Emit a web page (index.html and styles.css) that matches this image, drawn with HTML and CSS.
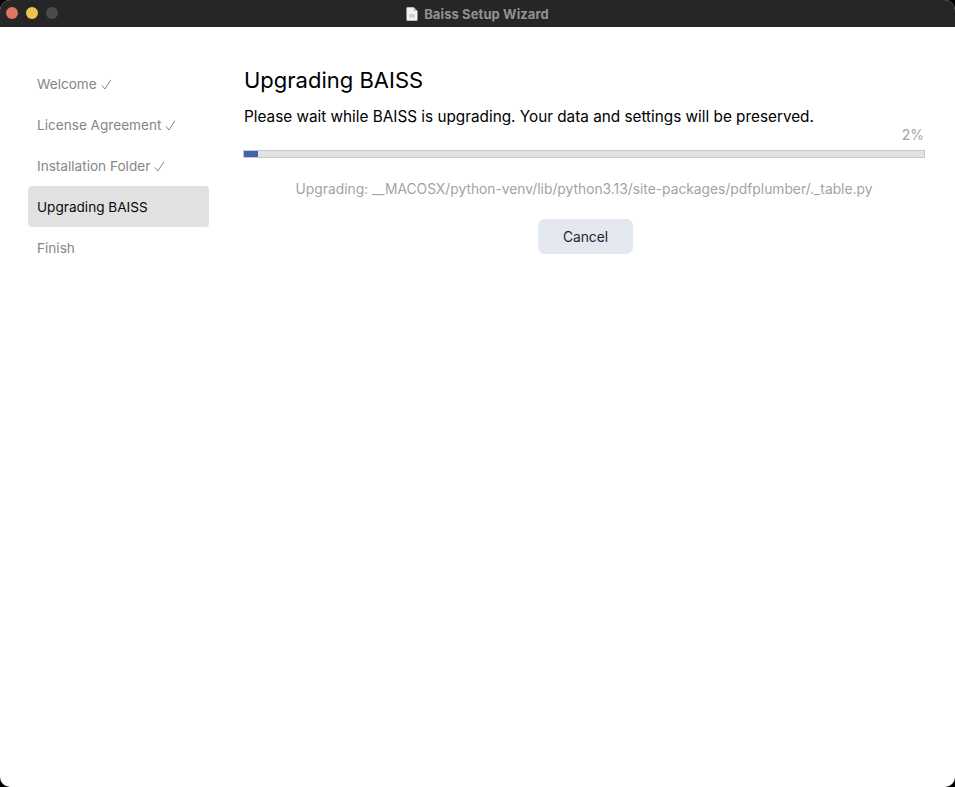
FILE: index.html
```html
<!DOCTYPE html>
<html lang="en">
<head>
<meta charset="utf-8">
<title>Baiss Setup Wizard</title>
<link rel="stylesheet" href="styles.css">
</head>
<body>
<div class="window">
  <header class="titlebar">
    <div class="lights">
      <span class="light red"></span>
      <span class="light yellow"></span>
      <span class="light grey"></span>
    </div>
    <div class="title">
      <svg class="doc" width="12" height="14" viewBox="0 0 12 14" aria-hidden="true">
        <path d="M0.5 1.2Q0.5 0.2 1.5 0.2H7.6L11.5 4.1V12.8Q11.5 13.8 10.5 13.8H1.5Q0.5 13.8 0.5 12.8Z" fill="#f1f1f1"/>
        <path d="M7.6 0.2L11.5 4.1H8.4Q7.6 4.1 7.6 3.3Z" fill="#bdbdbd"/>
        <rect x="3" y="7" width="6" height="3.5" fill="#cfcfcf"/>
      </svg>
      <span>Baiss Setup Wizard</span>
    </div>
  </header>
  <div class="content">
    <nav class="sidebar">
      <div class="step">Welcome <svg class="check" width="11" height="11" viewBox="0 0 11 11" aria-hidden="true"><path d="M1 6.4L3.9 10L9.9 0.8"/></svg></div>
      <div class="step">License Agreement <svg class="check" width="11" height="11" viewBox="0 0 11 11" aria-hidden="true"><path d="M1 6.4L3.9 10L9.9 0.8"/></svg></div>
      <div class="step">Installation Folder <svg class="check" width="11" height="11" viewBox="0 0 11 11" aria-hidden="true"><path d="M1 6.4L3.9 10L9.9 0.8"/></svg></div>
      <div class="step active">Upgrading BAISS</div>
      <div class="step">Finish</div>
    </nav>
    <main class="main">
      <h1 class="heading">Upgrading BAISS</h1>
      <p class="desc">Please wait while BAISS is upgrading. Your data and settings will be preserved.</p>
      <div class="percent">2%</div>
      <div class="progress"><div class="bar" style="width:2%"></div></div>
      <p class="file">Upgrading: __MACOSX/python-venv/lib/python3.13/site-packages/pdfplumber/._table.py</p>
      <div class="actions"><button class="cancel" type="button">Cancel</button></div>
    </main>
  </div>
</div>
</body>
</html>
```
FILE: styles.css
```css
html, body {
  margin: 0;
  height: 100%;
  background: #000;
}
body {
  font-family: Inter, "Liberation Sans", sans-serif;
  overflow: hidden;
}
.window {
  height: 787px;
  display: flex;
  flex-direction: column;
  background: #fff;
  border-radius: 10px;
  overflow: hidden;
}
.titlebar {
  height: 27px;
  flex: none;
  position: relative;
  background: #262626;
  display: flex;
  align-items: center;
  justify-content: center;
}
.lights {
  position: absolute;
  left: 6px;
  top: 7px;
  display: flex;
  gap: 8px;
}
.light {
  width: 12px;
  height: 12px;
  border-radius: 50%;
}
.red { background: #dd7561; }
.yellow { background: #e9c44f; }
.grey { background: #4b4b4b; }
.title {
  display: flex;
  align-items: center;
  gap: 6px;
  color: #929292;
  font-size: 13px;
  font-weight: 700;
  letter-spacing: 0.1px;
}
.doc { display: block; }
.content {
  flex: 1;
  display: flex;
  padding: 36px 30px 0 28px;
}
.sidebar {
  width: 181px;
  flex: none;
  margin-right: 34px;
}
.step {
  height: 41px;
  line-height: 43px;
  padding-left: 9px;
  font-size: 13.6px;
  color: #858585;
  border-radius: 4px;
}
.step.active {
  background: #e1e1e1;
  color: #0a0a0a;
}
.check {
  fill: none;
  stroke: #858585;
  stroke-width: 1;
  vertical-align: -1px;
}
.main {
  flex: 1;
  min-width: 0;
}
.heading {
  margin: 2px 0 0;
  padding-left: 1px;
  font-size: 22px;
  line-height: 30px;
  font-weight: 400;
  color: #000;
}
.desc {
  margin: 12px 0 0;
  padding-left: 1px;
  font-size: 15.3px;
  line-height: 20px;
  color: #000;
}
.percent {
  margin-top: -1px;
  text-align: right;
  padding-right: 1px;
  font-size: 14px;
  line-height: 17px;
  color: #a3a3a3;
}
.progress {
  height: 6px;
  margin-top: 7px;
  background: #e3e3e3;
  border: 1px solid #c9c9c9;
}
.bar {
  height: 100%;
  background: #4263b0;
}
.file {
  margin: 23px 0 0;
  font-size: 13.8px;
  line-height: 17px;
  text-align: center;
  color: #a3a3a3;
}
.actions {
  display: flex;
  justify-content: center;
  margin-top: 21px;
  padding-left: 3px;
}
.cancel {
  width: 95px;
  height: 35px;
  border: 0;
  border-radius: 7px;
  background: #e3e7ef;
  color: #1f2530;
  font: 400 13.8px Inter, "Liberation Sans", sans-serif;
}
```
